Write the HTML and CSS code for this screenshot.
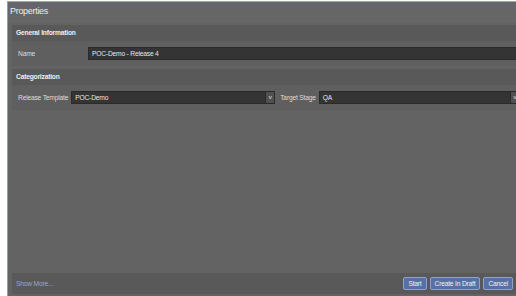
FILE: index.html
```html
<html>
<head>
	<title>Properties</title>
	<link rel="stylesheet" href="styles.css">
</head>
<body>
	<div class="window">
		<div class="title">Properties</div>

		<div class="section">
			<div class="section-head">General Information<span class="toggle"></span></div>
			<div class="row">
				<span class="label name-label">Name</span>
				<div class="field">POC-Demo - Release 4</div>
			</div>
		</div>

		<div class="section">
			<div class="section-head">Categorization<span class="toggle"></span></div>
			<div class="row">
				<span class="label">Release Template</span>
				<div class="field combo template">POC-Demo<span class="arrow">v</span></div>
				<span class="label stage-label">Target Stage</span>
				<div class="field combo">QA<span class="arrow">v</span></div>
			</div>
		</div>

		<div class="filler"></div>

		<div class="footer">
			<a class="more">Show More...</a>
			<div class="buttons">
				<span class="btn">Start</span>
				<span class="btn">Create In Draft</span>
				<span class="btn">Cancel</span>
			</div>
		</div>
	</div>
</body>
</html>
```

FILE: styles.css
```css
* {
	box-sizing: border-box;
}

body{
	margin: 0;
	background: #ffffff;
	overflow: hidden;
	font-family: "Liberation Sans", Arial, sans-serif;
	font-size: 6.7px;
	letter-spacing: -0.2px;
	color: #dcdcdc;
}

div.window{
	margin: 1px 0 0 7px;
	width: 513px;
	height: 296px;
	background: #636363;
	border-left: 1px solid #8c9cc6;
	border-top: 1px solid #9aa8d0;
	display: flex;
	flex-direction: column;
}

div.title{
	height: 21px;
	line-height: 19px;
	padding-left: 2px;
	font-size: 9px;
	letter-spacing: -0.3px;
	color: #ececec;
	background: #666666;
}

div.section{
	margin: 2px 0 3px 4px;
	background: #5f5f5f;
}

div.section + div.section{
	margin-top: 0;
}

div.section-head{
	position: relative;
	height: 16px;
	line-height: 16px;
	padding-left: 4px;
	font-weight: bold;
	color: #eeeeee;
	background: #595959;
}

span.toggle{
	position: absolute;
	right: -8px;
	top: 3px;
	width: 10px;
	height: 10px;
	border-radius: 50%;
	border: 1px solid #7a7a7a;
}

div.row{
	display: flex;
	align-items: center;
	height: 25px;
	padding-left: 6px;
}

span.label{
	margin-right: 3px;
	white-space: nowrap;
}

span.name-label{
	width: 67px;
}

span.stage-label{
	margin-left: 5px;
}

div.field{
	position: relative;
	flex: 1;
	height: 13px;
	line-height: 12px;
	padding-left: 3px;
	background: #343434;
	border: 1px solid #2a2a2a;
	color: #e6e6e6;
}

div.template{
	flex: none;
	width: 204px;
}

span.arrow{
	position: absolute;
	right: 0;
	top: 0;
	width: 9px;
	height: 11px;
	line-height: 10px;
	text-align: center;
	font-size: 6px;
	background: #505050;
	border-left: 1px solid #2a2a2a;
}

div.filler{
	flex: 1;
}

div.footer{
	display: flex;
	align-items: center;
	justify-content: space-between;
	height: 21px;
	margin: 0 0 3px 4px;
	padding: 0 7px 0 4px;
	background: #595959;
}

a.more{
	color: #94a6d0;
}

div.buttons{
	display: flex;
	gap: 3px;
}

span.btn{
	height: 13px;
	line-height: 11px;
	padding: 0 4px;
	color: #f0f0f0;
	background: #5870a6;
	border: 1px solid #8fa2cc;
	border-radius: 2px;
}
```
